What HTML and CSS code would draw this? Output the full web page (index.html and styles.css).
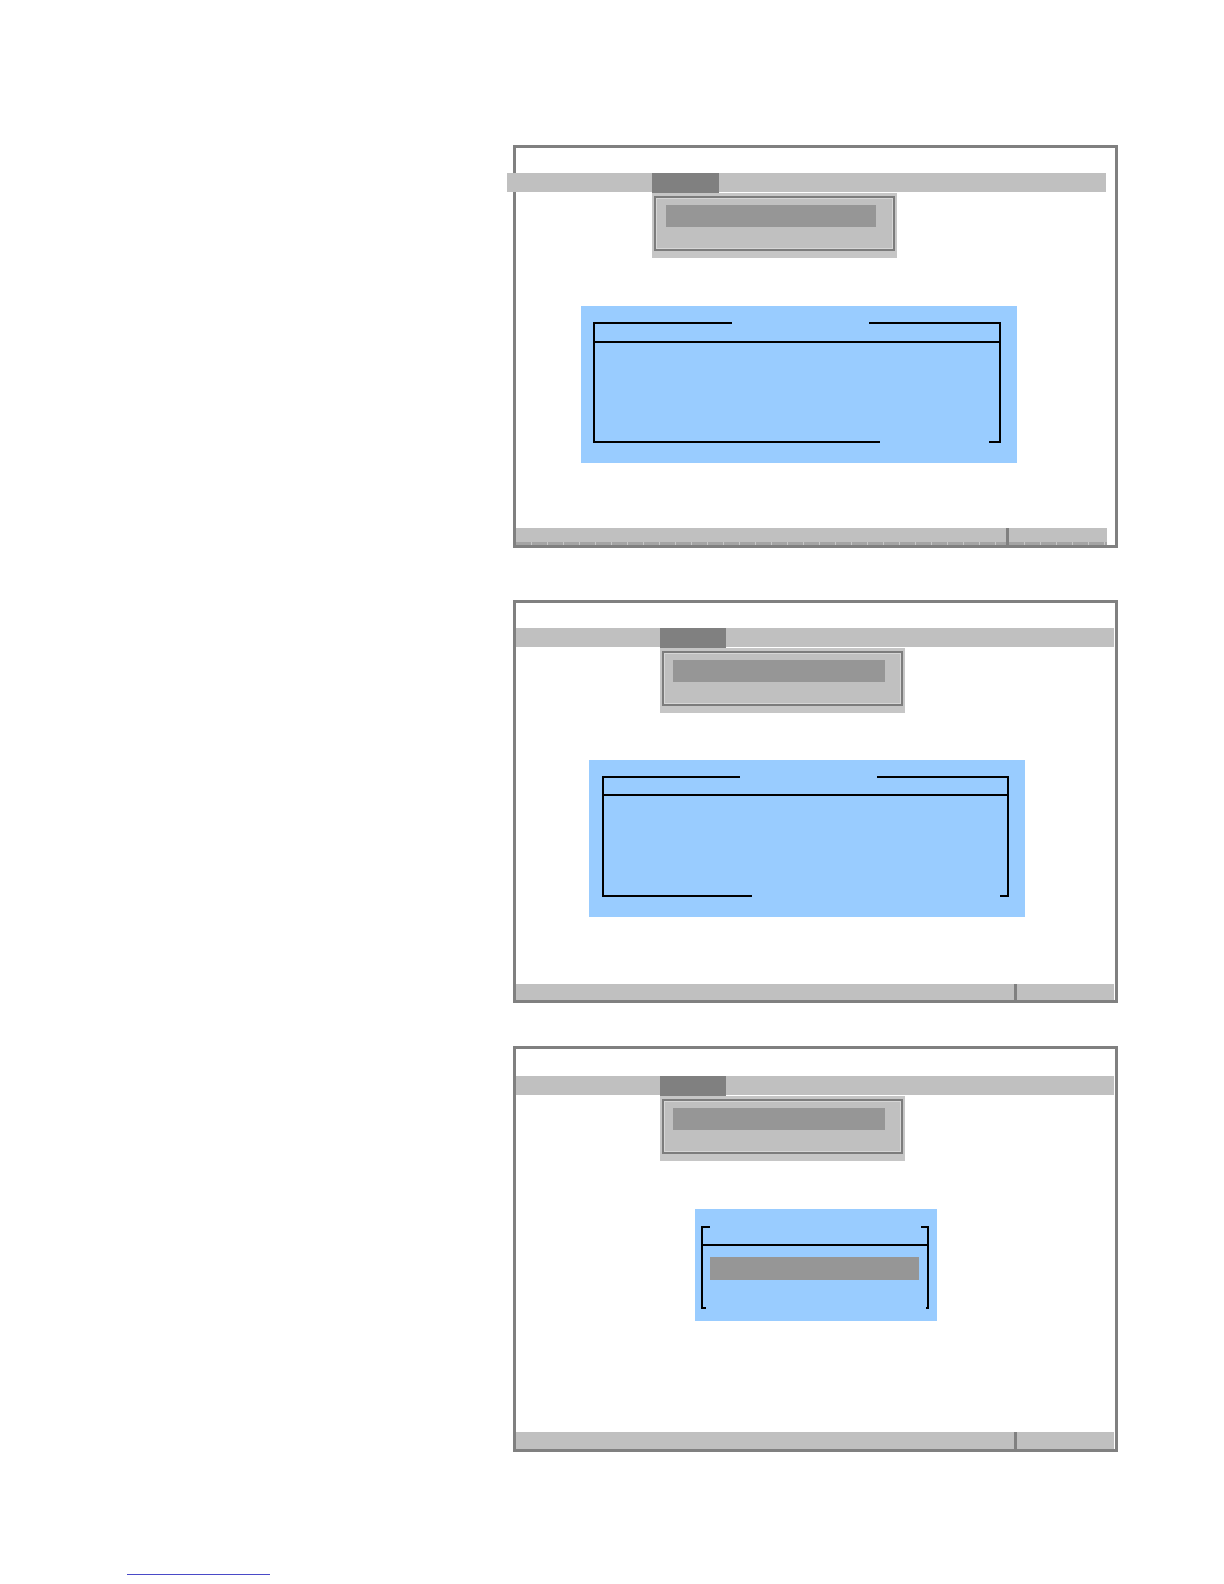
FILE: index.html
```html
<!DOCTYPE html>
<html lang="en">
<head>
<meta charset="utf-8">
<title>Menu screens</title>
<link rel="stylesheet" href="styles.css">
</head>
<body>
<div class="page">
  <div class="panel panel-1">
    <div class="menubar menubar-1"><div class="tab tab-1"></div></div>
    <div class="dropdown dropdown-1"><div class="dropdown-inner"><div class="item"></div></div></div>
    <div class="dialog dialog-1">
      <svg class="frame" width="436" height="157" viewBox="0 0 436 157">
        <path d="M13 16V137M12 17H151M288 17H420M419 16V137M12 36H420M12 136H299M408 136H420" />
      </svg>
    </div>
    <div class="statusbar statusbar-1 ticks"><div class="status-main status-main-1"></div><div class="sep"></div><div class="status-side"></div></div>
  </div>

  <div class="panel panel-2">
    <div class="menubar menubar-2"><div class="tab tab-2"></div></div>
    <div class="dropdown dropdown-2"><div class="dropdown-inner"><div class="item item-2"></div></div></div>
    <div class="dialog dialog-2">
      <svg class="frame" width="436" height="157" viewBox="0 0 436 157">
        <path d="M14 16V137M13 17H151M288 17H420M419 16V137M13 35H420M13 136H163M411 136H420" />
      </svg>
    </div>
    <div class="statusbar statusbar-2"><div class="status-main status-main-2"></div><div class="sep"></div><div class="status-side"></div></div>
  </div>

  <div class="panel panel-3">
    <div class="menubar menubar-3"><div class="tab tab-2"></div></div>
    <div class="dropdown dropdown-2"><div class="dropdown-inner"><div class="item item-2"></div></div></div>
    <div class="dialog dialog-3">
      <svg class="frame overlay" width="242" height="112" viewBox="0 0 242 112">
        <path d="M7 17V100M6 18H15M6 99H11M233 17V100M226 18H234M231 99H234M6 36H234" />
      </svg>
      <div class="choice"></div>
    </div>
    <div class="statusbar statusbar-3"><div class="status-main status-main-2"></div><div class="sep"></div><div class="status-side"></div></div>
  </div>

  <div class="footnote-rule"></div>
</div>
</body>
</html>
```

FILE: styles.css
```css
html, body {
  margin: 0;
  padding: 0;
  background: #ffffff;
  font-family: "Liberation Sans", Arial, sans-serif;
}

.page {
  width: 1224px;
  height: 1584px;
  box-sizing: border-box;
  padding-top: 145px;
  padding-left: 513px;
  display: flex;
  flex-direction: column;
}

.panel {
  width: 605px;
  height: 403px;
  box-sizing: border-box;
  border: 3px solid #808080;
  display: flex;
  flex-direction: column;
  flex-shrink: 0;
}

.panel-2 { margin-top: 52px; }
.panel-3 { margin-top: 43px; height: 406px; }

/* menu bar */
.menubar {
  height: 19px;
  background: #c0c0c0;
  display: flex;
  flex-shrink: 0;
}
.menubar-1 {
  margin-top: 25px;
  margin-left: -9px;
  width: 599px;
}
.menubar-2 {
  margin-top: 25px;
  width: 598px;
}
.menubar-3 {
  margin-top: 27px;
  width: 598px;
}
.tab {
  height: 20px;
  background: #808080;
}
.tab-1 { margin-left: 145px; width: 67px; }
.tab-2 { margin-left: 144px; width: 66px; }

/* dropdown menu */
.dropdown {
  width: 245px;
  height: 65px;
  box-sizing: border-box;
  padding: 3px 2px 7px 2px;
  background: #c6c6c6;
  flex-shrink: 0;
  margin-top: 1px;
}
.dropdown-1 { margin-left: 136px; }
.dropdown-2 { margin-left: 144px; }

.dropdown-inner {
  height: 100%;
  box-sizing: border-box;
  border: 2px solid #7c7c7c;
  background: #c0c0c0;
  box-shadow: inset 0 0 0 1px #d6d6d6;
  padding: 7px 0 0 10px;
}
.item {
  width: 210px;
  height: 22px;
  background: #969696;
}
.item-2 {
  width: 212px;
  margin-left: -1px;
}

/* blue dialogs */
.dialog {
  background: #99ccff;
  flex-shrink: 0;
  position: relative;
}
.dialog-1 {
  width: 436px;
  height: 157px;
  margin-top: 48px;
  margin-left: 65px;
}
.dialog-2 {
  width: 436px;
  height: 157px;
  margin-top: 47px;
  margin-left: 73px;
}
.dialog-3 {
  width: 242px;
  height: 112px;
  margin-top: 48px;
  margin-left: 179px;
  box-sizing: border-box;
  padding-top: 48px;
  padding-left: 15px;
}
.frame {
  display: block;
}
.frame path {
  fill: none;
  stroke: #000000;
  stroke-width: 2;
  shape-rendering: crispEdges;
}
.overlay {
  position: absolute;
  left: 0;
  top: 0;
}
.choice {
  width: 209px;
  height: 23px;
  background: #969696;
}

/* status bar */
.statusbar {
  margin-top: auto;
  display: flex;
  flex-shrink: 0;
}
.statusbar-1 { height: 17px; width: 591px; }
.statusbar-2 { height: 16px; width: 598px; }
.statusbar-3 { height: 17px; width: 598px; }

.status-main { background: #c0c0c0; height: 100%; }
.status-main-1 { width: 490px; }
.status-main-2 { width: 498px; }
.sep { width: 3px; background: #808080; height: 100%; }
.status-side { flex: 1; background: #c0c0c0; height: 100%; }

.ticks .status-main,
.ticks .status-side {
  background:
    repeating-linear-gradient(90deg, #a4a4a4 0 15px, #c8c8c8 15px 16px) left bottom / 100% 3px no-repeat,
    #c0c0c0;
}

.footnote-rule {
  margin-top: 122px;
  margin-left: -386px;
  width: 143px;
  height: 1px;
  background: #4a4ac8;
  flex-shrink: 0;
}
```
